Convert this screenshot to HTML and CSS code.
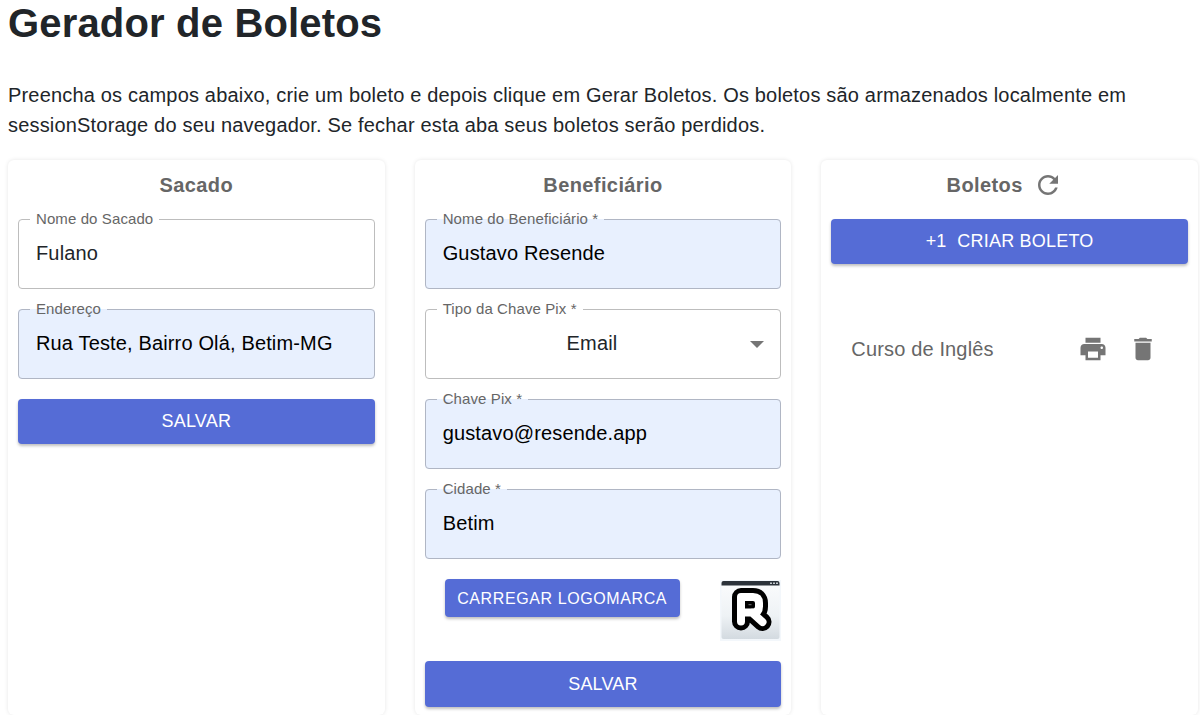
FILE: index.html
```html
<!DOCTYPE html>
<html lang="pt-BR">
<head>
<meta charset="utf-8">
<title>Gerador de Boletos</title>
<link rel="stylesheet" href="styles.css">
</head>
<body>
<h1 class="title">Gerador de Boletos</h1>
<p class="intro">Preencha os campos abaixo, crie um boleto e depois clique em Gerar Boletos. Os boletos são armazenados localmente em sessionStorage do seu navegador. Se fechar esta aba seus boletos serão perdidos.</p>
<main class="columns">
  <section class="card">
    <h2 class="card-title">Sacado</h2>
    <fieldset class="field"><legend>Nome do Sacado</legend><span class="value">Fulano</span></fieldset>
    <fieldset class="field filled"><legend>Endereço</legend><span class="value">Rua Teste, Bairro Olá, Betim-MG</span></fieldset>
    <button class="btn btn-save">Salvar</button>
  </section>
  <section class="card">
    <h2 class="card-title">Beneficiário</h2>
    <fieldset class="field filled"><legend>Nome do Beneficiário *</legend><span class="value">Gustavo Resende</span></fieldset>
    <fieldset class="field select"><legend>Tipo da Chave Pix *</legend><span class="value">Email</span><span class="caret"></span></fieldset>
    <fieldset class="field filled"><legend>Chave Pix *</legend><span class="value">gustavo@resende.app</span></fieldset>
    <fieldset class="field filled"><legend>Cidade *</legend><span class="value">Betim</span></fieldset>
    <div class="logo-row">
      <button class="btn btn-small">Carregar Logomarca</button>
      <svg class="logo" viewBox="0 0 61 61" aria-hidden="true">
        <defs><linearGradient id="bg" x1="0" y1="0" x2="0" y2="1"><stop offset="0" stop-color="#fbfcfd"/><stop offset=".6" stop-color="#eef2f5"/><stop offset="1" stop-color="#d3dae0"/></linearGradient></defs>
        <rect width="61" height="61" fill="#f3f7fb"/>
        <rect x="1.500" y="1" width="58" height="58" rx="2" fill="url(#bg)"/>
        <path d="M1.500 5.500V3q0-2 2-2h54q2 0 2 2v2.500z" fill="#2b323a"/>
        <path d="M50 2.500h2V4h-2zM53 2.500h2V4h-2zM56 2.500h2V4h-2z" fill="#c4c9ce"/>
        <path class="r-outer" d="M21 41.500V17H33Q39 17 39 23V26.500Q39 32.500 33 32.500H21M32 32.500L42.500 42"/>
        <path class="r-inner" d="M21 41.500V17H33Q39 17 39 23V26.500Q39 32.500 33 32.500H21M32 32.500L42.500 42"/>
        <path d="M28.500 24.700h3" stroke="#777" stroke-width="1"/>
      </svg>
    </div>
    <button class="btn btn-tall">Salvar</button>
  </section>
  <section class="card">
    <h2 class="card-title with-icon">Boletos
      <svg class="icon" viewBox="0 0 24 24" aria-hidden="true"><path d="M17.65 6.35C16.2 4.9 14.21 4 12 4c-4.42 0-7.99 3.58-7.99 8s3.57 8 7.99 8c3.730 0 6.840-2.550 7.730-6h-2.080c-.82 2.330-3.040 4-5.650 4-3.310 0-6-2.690-6-6s2.690-6 6-6c1.660 0 3.140.69 4.220 1.780L13 11h7V4l-2.350 2.350z"/></svg>
    </h2>
    <button class="btn"><span class="plus">+1</span>Criar Boleto</button>
    <div class="item">
      <span class="item-name">Curso de Inglês</span>
      <svg class="icon" viewBox="0 0 24 24" aria-hidden="true"><path d="M19 8H5c-1.660 0-3 1.340-3 3v6h4v4h12v-4h4v-6c0-1.660-1.340-3-3-3zm-3 11H8v-5h8v5zm3-7c-.55 0-1-.45-1-1s.45-1 1-1 1 .45 1 1-.45 1-1 1zm-1-9H6v4h12V3z"/></svg>
      <svg class="icon" viewBox="0 0 24 24" aria-hidden="true"><path d="M6 19c0 1.100.9 2 2 2h8c1.100 0 2-.9 2-2V7H6v12zM19 4h-3.500l-1-1h-5l-1 1H5v2h14V4z"/></svg>
    </div>
  </section>
</main>
</body>
</html>
```
FILE: styles.css
```css
* { box-sizing: border-box; }
html, body { height: 715px; overflow: hidden; }
body {
  margin: 0;
  padding: 0 2px 0 8px;
  background: #fff;
  color: #212529;
  font-family: "Liberation Sans", Arial, sans-serif;
}
.title {
  margin: 0;
  font-size: 40px;
  line-height: 46px;
  font-weight: 700;
  letter-spacing: .17px;
}
.intro {
  margin: 34px 0 0;
  font-size: 20px;
  line-height: 30px;
  letter-spacing: .18px;
}
.columns {
  display: grid;
  grid-template-columns: repeat(3, 1fr);
  gap: 30px;
  margin-top: 20px;
}
.card {
  display: flex;
  flex-direction: column;
  padding: 10px 10px 0;
  height: 555px;
  border-radius: 6px;
  background: #fff;
  box-shadow: 0 0 4px rgba(0, 0, 0, .1);
}
.card > * { flex: none; }
.card-title {
  margin: 0 0 9px;
  height: 31px;
  font-size: 20px;
  line-height: 31px;
  font-weight: 700;
  letter-spacing: .4px;
  color: #666;
  text-align: center;
}
.with-icon {
  display: flex;
  justify-content: center;
  align-items: center;
  gap: 10px;
  margin-bottom: 18px;
}
.with-icon .icon { margin-right: 10px; margin-top: -2px; }
.field {
  margin: 0 0 11px;
  min-width: 0;
  height: 79px;
  padding: 0 17px;
  border: 1px solid #bdbdbd;
  border-radius: 4px;
  background: #fff;
}
.field legend {
  margin-left: -6px;
  padding: 0 6px;
  font-size: 15px;
  line-height: 18px;
  letter-spacing: .1px;
  color: #666;
}
.filled {
  background: #e8f0fe;
  border-color: #b0b6c4;
}
.value {
  display: block;
  margin-top: 10px;
  font-size: 20px;
  line-height: 30px;
  letter-spacing: .15px;
  color: #212529;
}
.filled .value { color: #000; }
.select { position: relative; }
.select .value { text-align: center; padding-right: 22px; }
.caret {
  position: absolute;
  right: 16px;
  top: 23px;
  border-left: 7px solid transparent;
  border-right: 7px solid transparent;
  border-top: 7px solid #757575;
}
.btn {
  display: block;
  width: 100%;
  height: 45px;
  padding: 0 0 2px;
  border: 0;
  border-radius: 4px;
  background: #556cd6;
  color: #fff;
  font: 18px/1 "Liberation Sans", Arial, sans-serif;
  letter-spacing: .2px;
  text-transform: uppercase;
  box-shadow: 0 2px 3px rgba(0, 0, 0, .25);
}
.btn-save { margin-top: 9px; }
.btn-tall { height: 46px; margin-top: 21px; padding: 0; }
.logo-row {
  display: flex;
  align-items: flex-start;
  justify-content: space-between;
  height: 61px;
  margin-top: 9px;
  padding-left: 20px;
}
.btn-small {
  width: 235px;
  height: 38px;
  padding: 2px 0 0;
  font-size: 16px;
  letter-spacing: .6px;
}
.logo {
  width: 61px;
  height: 61px;
  margin-top: 1px;
}
.r-outer, .r-inner {
  fill: none;
  stroke-linejoin: round;
  stroke-linecap: round;
}
.r-outer { stroke: #000; stroke-width: 18; }
.r-inner { stroke: #fff; stroke-width: 8; }
.plus { margin-right: 11px; letter-spacing: 0; }
.item {
  display: flex;
  align-items: center;
  margin-top: 65px;
  padding: 0 30px 0 20px;
  height: 40px;
}
.item-name {
  flex: 1;
  font-size: 20px;
  letter-spacing: .15px;
  color: #666;
}
.item .icon + .icon { margin-left: 20px; }
.icon {
  width: 30px;
  height: 30px;
  fill: #757575;
  flex: none;
}
```
